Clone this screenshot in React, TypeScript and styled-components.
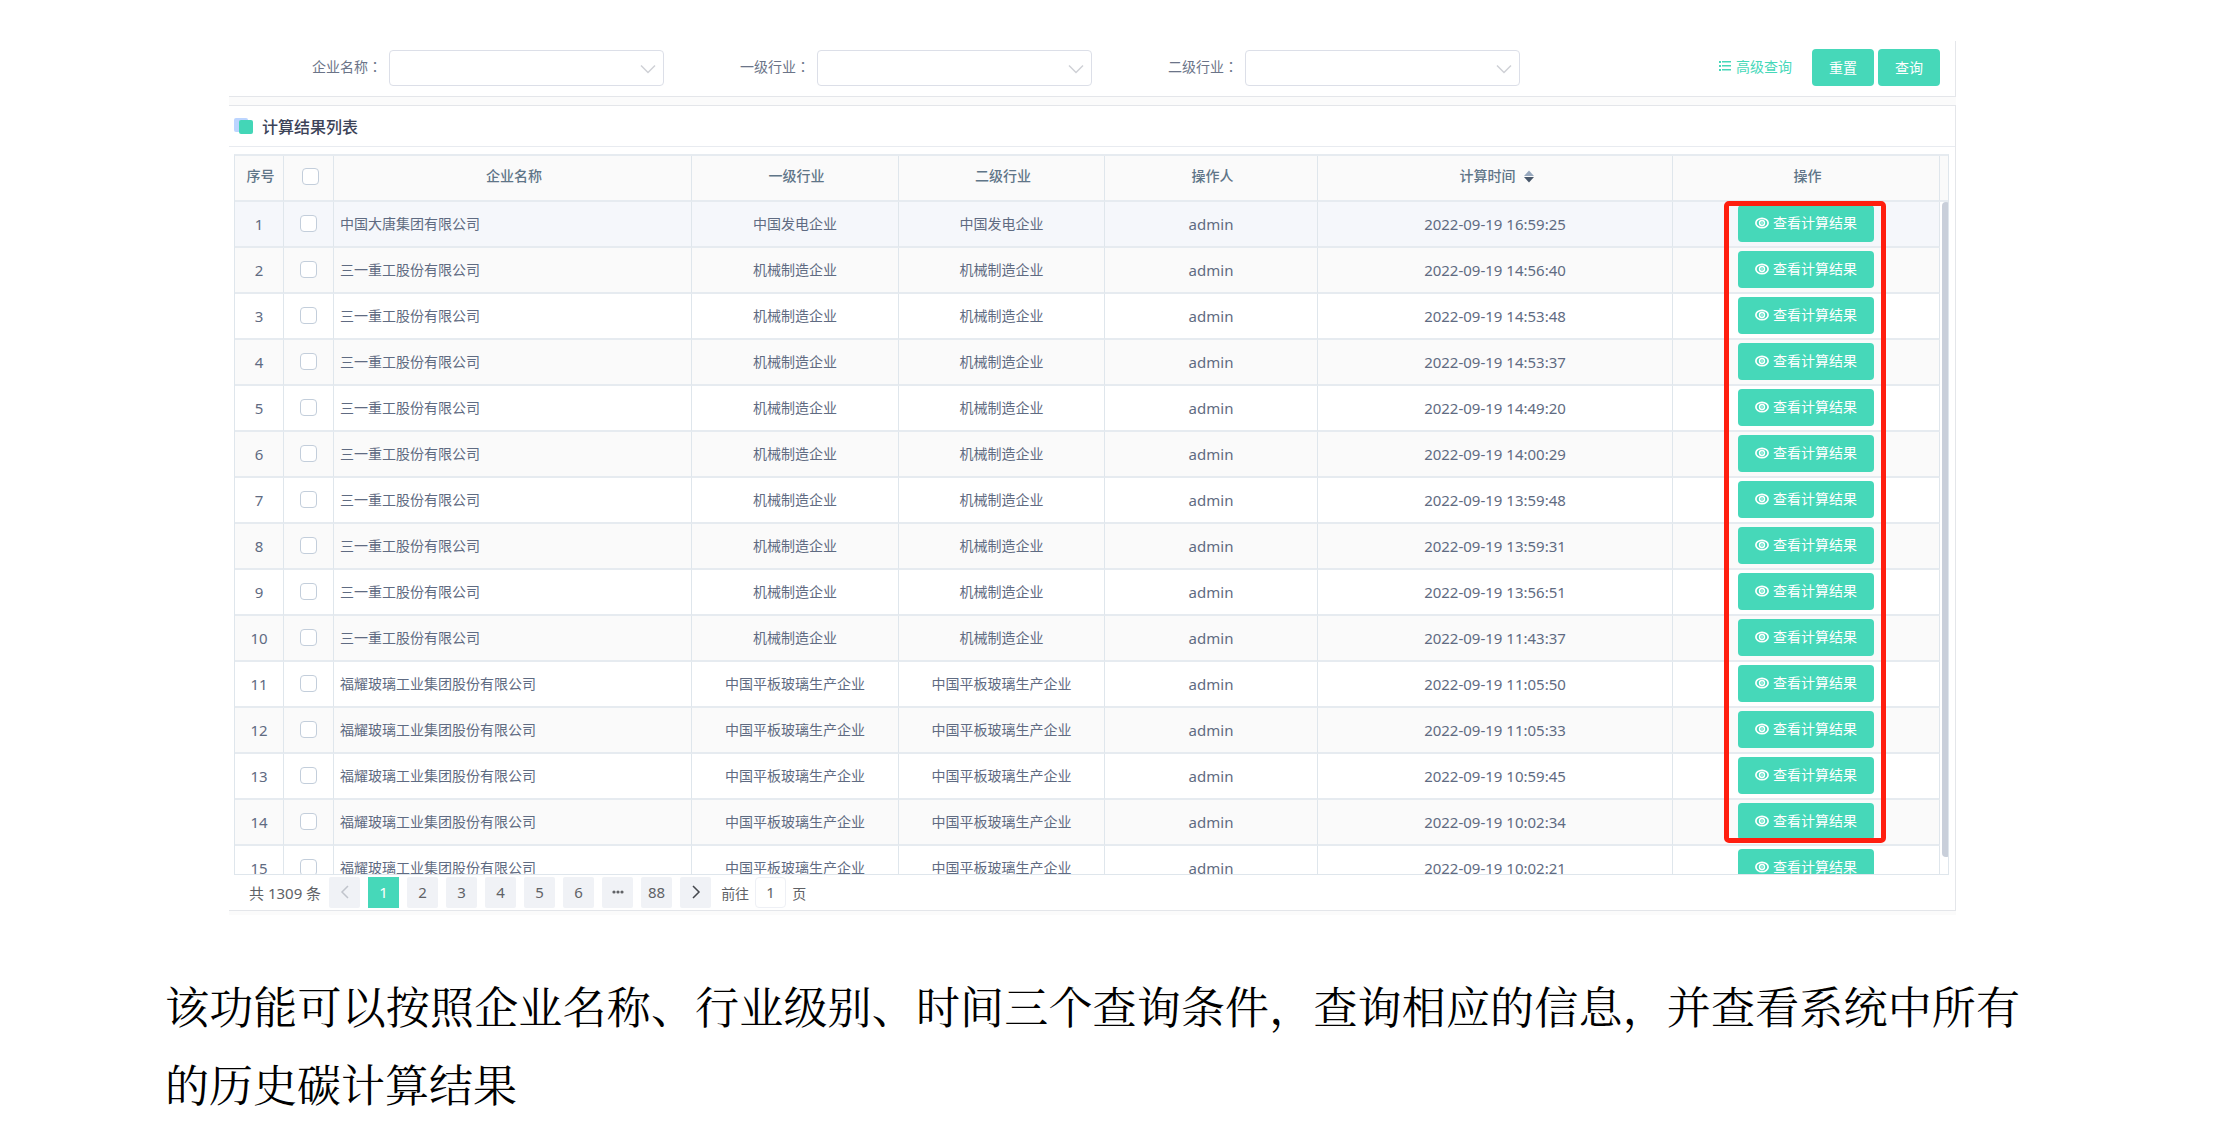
import React from "react";
import styled, { createGlobalStyle, css } from "styled-components";

const color = {
  brand: "#46d8b9",
  line: "#e6ebf0",
  column: "#dfe6ec",
  text: "#5f6b82",
  head: "#5f7588",
};

const GlobalStyle = createGlobalStyle`
  * { box-sizing: border-box; }
  body {
    margin: 0;
    background: #fff;
    color: ${color.text};
    font-family: "Noto Sans", "Noto Sans CJK SC", sans-serif;
    font-size: 14px;
  }
  button, input, select { font: inherit; color: inherit; margin: 0; }
`;

const Page = styled.main`
  padding: 41px 282px 0 229px;
`;

const Screen = styled.div`
  background: #fbfbfb;
  padding-bottom: 4px;
`;

const Panel = styled.section`
  background: #fff;
  border: 1px solid #e4e6ea;
  border-left: 0;
`;

const SearchPanel = styled(Panel)`
  display: flex;
  align-items: center;
  border-top: 0;
  margin-bottom: 8px;
  padding: 8px 15px 10px 83px;
`;

const Fields = styled.div`
  display: flex;
  flex: 1;
  gap: 76px;
`;

const Field = styled.div`
  display: flex;
  align-items: center;
  gap: 7px;
  color: #6b7488;
`;

const FieldLabel = styled.label`
  padding-bottom: 4px;
`;

const Colon = styled.span`
  font-family: "Noto Sans CJK TC", sans-serif;
`;

const SelectBox = styled.div`
  position: relative;
  width: 275px;
`;

const Select = styled.select`
  display: block;
  width: 100%;
  height: 36px;
  appearance: none;
  background: #fff;
  border: 1px solid #dcdfe8;
  border-radius: 4px;
  padding: 0 32px 0 12px;
`;

const SelectArrow = styled.svg`
  position: absolute;
  right: 8px;
  top: 14px;
  width: 16px;
  height: 10px;
  pointer-events: none;
`;

const AdvancedLink = styled.a`
  display: flex;
  align-items: center;
  gap: 5px;
  margin-right: 20px;
  padding-bottom: 4px;
  color: ${color.brand};
  text-decoration: none;
`;

const Actions = styled.div`
  display: flex;
  gap: 4px;
`;

const Button = styled.button`
  display: inline-flex;
  align-items: center;
  justify-content: center;
  gap: 4px;
  height: 37px;
  padding: 0 17px 1px;
  border: 0;
  border-radius: 4px;
  background: ${color.brand};
  color: #fff;
  white-space: nowrap;
`;

const TitleBar = styled.header`
  display: flex;
  align-items: center;
  gap: 9px;
  height: 41px;
  padding-left: 5px;
  border-bottom: 1px solid #e8ebf0;
`;

const Title = styled.h1`
  margin: 0;
  padding-top: 2px;
  font-size: 16px;
  line-height: 24px;
  font-weight: 500;
  color: #3c4358;
`;

const TableArea = styled.div`
  position: relative;
  padding: 7px 6px 0 5px;
`;

const TableFrame = styled.div`
  display: flex;
  height: 721px;
  overflow: hidden;
  border: 1px solid ${color.column};
  border-top: 2px solid ${color.line};
`;

const Table = styled.table`
  flex: 1;
  width: 100%;
  min-width: 0;
  height: max-content;
  table-layout: fixed;
  border-collapse: separate;
  border-spacing: 0;
`;

const cell = css`
  height: 46px;
  border-right: 1px solid ${color.column};
  border-bottom: 2px solid ${color.line};
  text-align: center;
  white-space: nowrap;
  line-height: 20px;
`;

const Th = styled.th`
  ${cell}
  padding: 0 0 4px 3px;
  background: #fafafa;
  color: ${color.head};
  font-weight: 500;
`;

const Td = styled.td<{ $left?: boolean; $latin?: boolean }>`
  ${cell}
  padding: 0 ${(p) => (p.$left ? 6 : 0)}px 1px;
  text-align: ${(p) => (p.$left ? "left" : "center")};
  font-size: ${(p) => (p.$latin ? 15 : 14)}px;
`;

const Row = styled.tr<{ $active?: boolean }>`
  background: #fff;
  &:nth-child(even) { background: #fafafa; }
  ${(p) => p.$active && css`&& { background: #f5f7fb; }`}
`;

const Check = styled.input`
  && { margin: 0 auto; }
  display: block;
  width: 17px;
  height: 17px;
  appearance: none;
  background: #fff;
  border: 1px solid #c3cedb;
  border-radius: 4px;
  &:checked { background: ${color.brand}; }
`;

const SortButton = styled.button`
  display: inline-flex;
  align-items: center;
  gap: 8px;
  padding: 0;
  border: 0;
  background: none;
`;

const Gutter = styled.div`
  width: 10px;
  flex: none;
  background: #fff;
`;

const GutterHead = styled.div`
  height: 46px;
  background: #fafafa;
  border-bottom: 2px solid ${color.line};
`;

const Thumb = styled.div`
  height: 655px;
  margin-left: 2px;
  border-radius: 4px;
  background: #c9cfda;
`;

const Highlight = styled.div`
  position: absolute;
  top: 54px;
  right: 69px;
  width: 162px;
  height: 642px;
  border: 5px solid #ff1e0f;
  border-radius: 5px;
  pointer-events: none;
`;

const Pagination = styled.nav`
  display: flex;
  align-items: center;
  gap: 8px;
  height: 35px;
  padding-left: 20px;
  font-size: 15px;
  color: #606266;
`;

const PageButton = styled.button<{ $current?: boolean }>`
  display: flex;
  align-items: center;
  justify-content: center;
  width: 31px;
  height: 31px;
  padding: 0 0 2px;
  border: 0;
  border-radius: ${(p) => (p.$current ? 0 : 2)}px;
  background: ${(p) => (p.$current ? color.brand : "#f0f2f6")};
  color: ${(p) => (p.$current ? "#fff" : "#606266")};
`;

const Jump = styled.label`
  display: flex;
  align-items: center;
  gap: 6px;
  padding-left: 2px;
  font-size: 14px;
`;

const JumpInput = styled.input`
  width: 31px;
  height: 31px;
  padding: 0 0 2px;
  border: 1px solid #eef0f5;
  border-radius: 4px;
  text-align: center;
  font-size: 15px;
`;

const Caption = styled.p`
  margin: 51px -64px 0;
  font-family: "Noto Serif CJK SC", "Noto Sans CJK SC", serif;
  font-size: 44px;
  line-height: 78px;
  font-weight: 400;
  text-align: justify;
  color: #000;
`;

const EyeIcon = () => (
  <svg width="14" height="12" viewBox="0 0 14 12" fill="none" stroke="currentColor" aria-hidden="true">
    <ellipse cx="7" cy="6" rx="6.1" ry="4.7" strokeWidth="1.7" />
    <circle cx="7" cy="6" r="2.5" strokeWidth="1.4" />
    <circle cx="7" cy="6" r="0.8" fill="currentColor" stroke="none" />
  </svg>
);

const ListIcon = () => (
  <svg width="12" height="12" viewBox="0 0 12 12" fill="currentColor" aria-hidden="true">
    {[1, 5, 9].map((y) => (
      <g key={y}>
        <rect x="0" y={y} width="2" height="2" />
        <rect x="3" y={y} width="9" height="1.5" />
      </g>
    ))}
  </svg>
);

const SortIcon = () => (
  <svg width="10" height="13" viewBox="0 0 10 13" aria-hidden="true">
    <path d="M5 0.5 10 6H0Z" fill="#97a8be" />
    <path d="M0 7h10L5 12.5Z" fill="#48576a" />
  </svg>
);

const TitleIcon = () => (
  <svg width="19" height="16" viewBox="0 0 19 16" aria-hidden="true">
    <rect x="0" y="0" width="14" height="14" rx="2" fill="#bcd5ff" />
    <rect x="5" y="2" width="14" height="14" rx="2" fill="#43d6b7" />
  </svg>
);

const Chevron = ({ d, stroke }: { d: string; stroke: string }) => (
  <svg width="14" height="16" viewBox="0 0 14 16" fill="none" stroke={stroke} strokeWidth="1.5" aria-hidden="true">
    <path d={d} />
  </svg>
);

const company = {
  power: ["中国大唐集团有限公司", "中国发电企业"],
  machine: ["三一重工股份有限公司", "机械制造企业"],
  glass: ["福耀玻璃工业集团股份有限公司", "中国平板玻璃生产企业"],
};

const rows: [string[], string][] = [
  [company.power, "16:59:25"],
  [company.machine, "14:56:40"],
  [company.machine, "14:53:48"],
  [company.machine, "14:53:37"],
  [company.machine, "14:49:20"],
  [company.machine, "14:00:29"],
  [company.machine, "13:59:48"],
  [company.machine, "13:59:31"],
  [company.machine, "13:56:51"],
  [company.machine, "11:43:37"],
  [company.glass, "11:05:50"],
  [company.glass, "11:05:33"],
  [company.glass, "10:59:45"],
  [company.glass, "10:02:34"],
  [company.glass, "10:02:21"],
];

const columnWidths = [49, 50, 358, 207, 206, 213, 355, 267];
const filters = ["企业名称", "一级行业", "二级行业"];

export default function App() {
  return (
    <>
      <GlobalStyle />
      <Page>
        <Screen>
          <SearchPanel>
            <Fields>
              {filters.map((name, i) => (
                <Field key={name}>
                  <FieldLabel htmlFor={`filter-${i}`}>
                    {name}
                    <Colon>：</Colon>
                  </FieldLabel>
                  <SelectBox>
                    <Select id={`filter-${i}`} defaultValue="">
                      <option value="" />
                    </Select>
                    <SelectArrow viewBox="0 0 16 10" fill="none" stroke="#cfd1d6" strokeWidth="1.5">
                      <path d="M1 1.5 8 8.5 15 1.5" />
                    </SelectArrow>
                  </SelectBox>
                </Field>
              ))}
            </Fields>
            <AdvancedLink href="#advanced">
              <ListIcon />
              高级查询
            </AdvancedLink>
            <Actions>
              <Button type="button">重置</Button>
              <Button type="button">查询</Button>
            </Actions>
          </SearchPanel>

          <Panel>
            <TitleBar>
              <TitleIcon />
              <Title>计算结果列表</Title>
            </TitleBar>
            <TableArea>
              <TableFrame>
                <Table>
                  <colgroup>
                    {columnWidths.map((w, i) => (
                      <col key={i} style={{ width: w }} />
                    ))}
                  </colgroup>
                  <thead>
                    <tr>
                      <Th>序号</Th>
                      <Th>
                        <Check type="checkbox" aria-label="全选" />
                      </Th>
                      <Th>企业名称</Th>
                      <Th>一级行业</Th>
                      <Th>二级行业</Th>
                      <Th>操作人</Th>
                      <Th>
                        <SortButton type="button">
                          计算时间
                          <SortIcon />
                        </SortButton>
                      </Th>
                      <Th>操作</Th>
                    </tr>
                  </thead>
                  <tbody>
                    {rows.map(([[name, industry], time], i) => (
                      <Row key={i} $active={i === 0}>
                        <Td $latin>{i + 1}</Td>
                        <Td>
                          <Check type="checkbox" aria-label={`选择第${i + 1}行`} />
                        </Td>
                        <Td $left>{name}</Td>
                        <Td>{industry}</Td>
                        <Td>{industry}</Td>
                        <Td $latin>admin</Td>
                        <Td $latin>2022-09-19 {time}</Td>
                        <Td>
                          <Button type="button">
                            <EyeIcon />
                            查看计算结果
                          </Button>
                        </Td>
                      </Row>
                    ))}
                  </tbody>
                </Table>
                <Gutter>
                  <GutterHead />
                  <Thumb />
                </Gutter>
              </TableFrame>
              <Highlight />
            </TableArea>
            <Pagination aria-label="分页">
              <span>共 1309 条</span>
              <PageButton type="button" aria-label="上一页" disabled>
                <Chevron d="M10 2 4 8 10 14" stroke="#c0c4cc" />
              </PageButton>
              {["1", "2", "3", "4", "5", "6", "•••", "88"].map((p) => (
                <PageButton key={p} type="button" $current={p === "1"}>
                  {p === "•••" ? (
                    <svg width="12" height="4" viewBox="0 0 12 4" fill="#606266" aria-label="更多">
                      <circle cx="2" cy="2" r="1.6" />
                      <circle cx="6" cy="2" r="1.6" />
                      <circle cx="10" cy="2" r="1.6" />
                    </svg>
                  ) : (
                    p
                  )}
                </PageButton>
              ))}
              <PageButton type="button" aria-label="下一页">
                <Chevron d="M4 2 10 8 4 14" stroke="#45484e" />
              </PageButton>
              <Jump>
                前往
                <JumpInput defaultValue="1" />
                页
              </Jump>
            </Pagination>
          </Panel>
        </Screen>
        <Caption>
          该功能可以按照企业名称、行业级别、时间三个查询条件，查询相应的信息，并查看系统中所有的历史碳计算结果
        </Caption>
      </Page>
    </>
  );
}
